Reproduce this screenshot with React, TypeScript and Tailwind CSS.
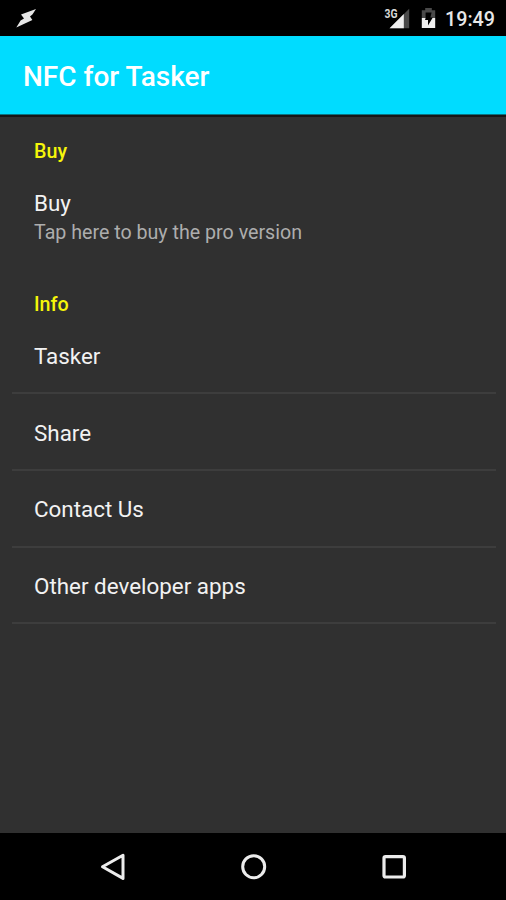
interface PreferenceProps {
  title: string;
}

const infoItems = ['Tasker', 'Share', 'Contact Us', 'Other developer apps'];

function StatusBar() {
  return (
    <div className="flex h-9 shrink-0 items-center justify-between bg-black pl-4 pr-[11px]">
      <svg width="22" height="20" viewBox="0 0 22 20" className="fill-[#e6e6e6]">
        <path d="M20 1 L5 6.4 L8 10.6 L4.6 12.6 L0.3 19.5 L16.4 12 L14 8.4 L16.4 6.4 Z" />
      </svg>
      <div className="flex items-center">
        <svg width="26" height="22" viewBox="0 0 26 22" className="mr-[11px]">
          <path d="M25.2 1.8 V21.2 H5.6 Z" fill="#4a4a4a" />
          <path d="M0 0 H14 V8 L9.5 12 H0 Z" fill="#000" />
          <path d="M19.8 7 V21.2 H5.6 Z" fill="#f0f0f0" />
          <text
            x="0.5"
            y="10.5"
            fontFamily="Roboto, sans-serif"
            fontSize="12"
            fontWeight="700"
            textLength="13"
            lengthAdjust="spacingAndGlyphs"
            fill="#d8d8d8"
          >
            3G
          </text>
        </svg>
        <svg width="15" height="22" viewBox="0 0 15 22" className="mr-[9px]">
          <path d="M4.2 1 H10.8 V3.2 H14.2 V11 H0.8 V3.2 H4.2 Z" fill="#4a4a4a" />
          <path d="M0.8 11 H14.2 V21 H0.8 Z" fill="#f0f0f0" />
          <path d="M10.6 5.4 H4.6 V11 L4 13 H7 V18.5 L11.8 10.6 H9.4 Z" fill="#000" />
        </svg>
        <span className="pt-[3px] text-[19.7px] font-medium leading-6 text-[#e8e8e8]">19:49</span>
      </div>
    </div>
  );
}

function CategoryHeader({ title }: PreferenceProps) {
  return <h2 className="h-[27px] px-[22px] text-[19.7px] font-medium leading-[28px] text-[#f5f50a]">{title}</h2>;
}

function PreferenceRow({ title }: PreferenceProps) {
  return (
    <li className="flex h-[76.6px] items-center border-b-2 border-[#3d3d3d] px-[22px] pt-[3.6px] text-[22.4px] text-[#f2f2f2]">
      {title}
    </li>
  );
}

function NavigationBar() {
  return (
    <div className="flex h-[67px] shrink-0 items-center justify-center gap-[112px] bg-black pl-px">
      <svg width="28" height="28" viewBox="0 0 28 28" fill="none" stroke="#ececec" strokeWidth="3" strokeLinejoin="round">
        <path d="M23 2.2 V25.4 L2.5 13.8 Z" />
      </svg>
      <svg width="28" height="28" viewBox="0 0 28 28" fill="none" stroke="#ececec" strokeWidth="3">
        <circle cx="13.7" cy="13.7" r="11" />
      </svg>
      <svg width="28" height="28" viewBox="0 0 28 28" fill="none" stroke="#ececec" strokeWidth="3.2">
        <rect x="4" y="3.6" width="20.4" height="20.4" rx="1.5" />
      </svg>
    </div>
  );
}

export default function App() {
  return (
    <div className="flex h-[900px] w-[506px] flex-col overflow-hidden bg-[#303030] font-[Roboto,sans-serif]">
      <StatusBar />
      <header className="flex h-[79px] shrink-0 items-center border-b border-[#0a7380] bg-[#00dcff] px-[23px] pt-[3px]">
        <h1 className="text-[28px] font-medium text-white">NFC for Tasker</h1>
      </header>
      <main className="flex-1 border-t-2 border-[#161616] px-3 pt-[21px]">
        <CategoryHeader title="Buy" />
        <div className="h-[126px] px-[22px] pt-[24px]">
          <p className="text-[22.4px] leading-[28px] text-[#f2f2f2]">Buy</p>
          <p className="text-[19.65px] leading-[31px] text-[#adadad]">Tap here to buy the pro version</p>
        </div>
        <CategoryHeader title="Info" />
        <ul className="-mr-0.5 -mt-[0.2px]">
          {infoItems.map((item) => (
            <PreferenceRow key={item} title={item} />
          ))}
        </ul>
      </main>
      <NavigationBar />
    </div>
  );
}
